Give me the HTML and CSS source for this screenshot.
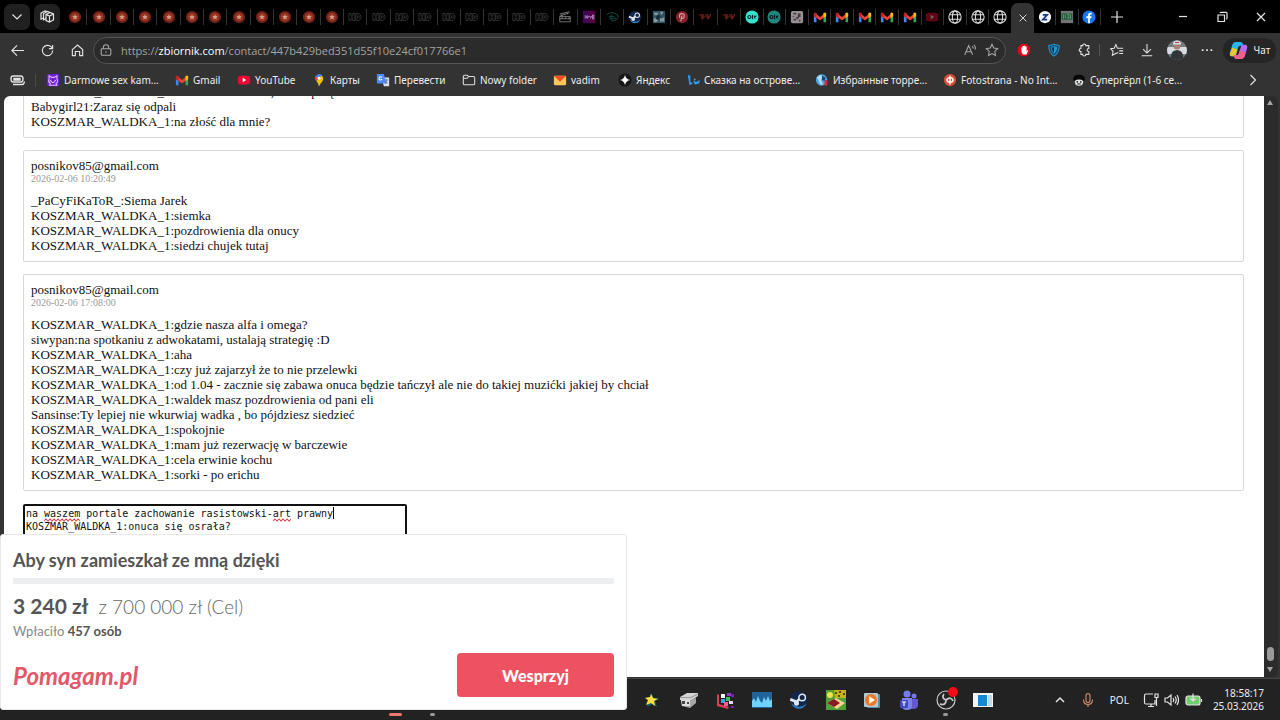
FILE: index.html
```
<!DOCTYPE html>
<html lang="pl">
<head>
    <meta charset="UTF-8">
    <meta name="viewport" content="width=device-width, initial-scale=1.0">
    <title>zbiornik.com</title>
    <link rel="stylesheet" href="styles.css">
</head>
<body>

<svg class="symbols" aria-hidden="true">
    <symbol id="i-star" viewBox="0 0 16 16"><circle cx="8" cy="8" r="7" fill="#6d2017"/><circle cx="8" cy="8" r="5" fill="#983520"/><path d="M8 4.8l.9 2.1 2.3.2-1.7 1.5.5 2.3L8 9.7l-2 1.2.5-2.3-1.7-1.5 2.3-.2z" fill="#d3a08e"/></symbol>
    <symbol id="i-hd" viewBox="0 0 16 16"><path d="M1 4h2.5v3h2V4H8v8H5.500V9h-2v3H1zM9 4h3q3 1 3 4t-3 4H9zM11 6.500h1q1 .5 1 1.500t-1 1.500h-1z" fill="none" stroke="#424242" stroke-width=".8"/></symbol>
    <symbol id="i-clap" viewBox="0 0 16 16"><path d="M2 7.5h12v6H2zM2 7l11-4M2 4.5L13 2M4 5l1 2M7 4l1 2M10 3l1 2M2 10h12M5 8l-1 2M9 8l-1 2M13 8l-1 2" fill="none" stroke="#8b8b8b" stroke-width=".9"/></symbol>
    <symbol id="i-sky" viewBox="0 0 16 16"><rect x="1" y="1" width="14" height="14" fill="#410458"/><rect x="8" y="1" width="7" height="14" fill="#570040"/><path d="M3 7h2M3 9h2M5 7v2M6.5 6v4M6.5 8l2-1M9 7l1 2 1-2M12 6h1.5v4H12z" stroke="#a477b9" fill="none"/></symbol>
    <symbol id="i-disney" viewBox="0 0 16 16"><path d="M2 5q6-4 11 0t-2 7q-4 1-4-1V5M4 8q4-2 7 0t-2 2H5M13 5l2 1" fill="none" stroke="#114d45" stroke-width="1.1"/></symbol>
    <symbol id="i-steam" viewBox="0 0 16 16"><circle cx="8" cy="8" r="7" fill="#10284d"/><path d="M1.500 10.500Q8 16 14 11q-2 4-6 4t-6.500-4.500z" fill="#2e7eb8"/><path d="M1 7.500l5 2 3-3" stroke="#dce7f1" stroke-width="2.200" fill="none"/><circle cx="10.500" cy="6" r="2.600" fill="#14213d" stroke="#dce7f1" stroke-width="1.200"/><circle cx="6" cy="10.500" r="2" fill="#dce7f1"/></symbol>
    <symbol id="i-pic" viewBox="0 0 16 16"><rect x="1" y="1" width="14" height="14" fill="#315368"/><path d="M2 3h5v3H3zM9 2h4l-2 4zM2 10l5-3 4 3 3-2v5H9v-3L5 14H2z" fill="#8a9a9b"/><path d="M6 5l4 2-2 5-4-2z" fill="#172f3b"/></symbol>
    <symbol id="i-pin" viewBox="0 0 16 16"><circle cx="8" cy="8" r="7" fill="#8b2029"/><path d="M6.500 13L8 6.500M5.500 9Q4 4 8 4.200T10 9q-1.500 1-2.500 0" fill="none" stroke="#d0a2a5" stroke-width="1.300"/></symbol>
    <symbol id="i-red" viewBox="0 0 16 16"><path d="M1 5.500h5L4 8h3l-3 3M8 5.500h3v4M9 8h4l-2 3M14.500 4.500L13 8" fill="none" stroke="#6b1c15" stroke-width="1.500"/></symbol>
    <symbol id="i-olx" viewBox="0 0 16 16"><circle cx="8" cy="8" r="7.500" fill="#31e5d2"/><circle cx="5" cy="8" r="1.700" fill="none" stroke="#062b30" stroke-width="1.300"/><path d="M8.500 5.500v5M10 6.500l3 3M13 6.500l-3 3" stroke="#062b30" stroke-width="1.300"/></symbol>
    <symbol id="i-pixel" viewBox="0 0 16 16"><rect x="1" y="1" width="14" height="14" rx="2" fill="#969093"/><path d="M4 3h3v2H4zM9 4h3v4h-2v2H7v2H4v-2h3V8h2zM3 7h2v1H3zM10 11h2v2h-2z" fill="#433841"/></symbol>
    <symbol id="i-gmail" viewBox="0 0 16 16"><path d="M1 14V4h3v10z" fill="#4285f4"/><path d="M12 14V4h3v10z" fill="#34a853"/><path d="M2 3l6 5 6-5v4.500L8 12 2 7.500z" fill="#ea4335"/><path d="M1 4q1-2 3-.5V9L1 7z" fill="#c5221f"/><path d="M15 4q-1-2-3-.5V9l3-2z" fill="#fbbc04"/></symbol>
    <symbol id="i-yt" viewBox="0 0 16 16"><rect x="1" y="3" width="14" height="10" rx="3" fill="#f00533"/><path d="M6.5 5.5v5l4-2.5z" fill="#fff"/></symbol>
    <symbol id="i-globe" viewBox="0 0 16 16"><g fill="none" stroke="#ddd" stroke-width="1.2"><circle cx="8" cy="8" r="7"/><ellipse cx="8" cy="8" rx="3" ry="7"/><path d="M1.500 5.500h13M1.500 10.500h13"/></g></symbol>
    <symbol id="i-z" viewBox="0 0 16 16"><circle cx="8" cy="8" r="7" fill="#f7f9ff"/><path d="M5.500 5.500h5l-5 5.500h5" fill="none" stroke="#183b80" stroke-width="2"/></symbol>
    <symbol id="i-green" viewBox="0 0 16 16"><rect x="1" y="1" width="14" height="14" fill="#707574"/><path d="M2 4h12v7H2z" fill="#1e5c35"/><path d="M4 5v5M6 5v4M8 5h2v4H8M12 5v5" stroke="#609377" fill="none"/></symbol>
    <symbol id="i-fb" viewBox="0 0 16 16"><circle cx="8" cy="8" r="7.500" fill="#1877f2"/><path d="M7 15V9.500H5V7.200h2V5.500Q7 3 9.500 3H11v2H9.800Q9 5 9 6v1.200h2l-.4 2.300H9V15z" fill="#fff"/></symbol>
</svg>

<div class="tabstrip">
    <button class="chip" aria-label="Karty"><svg viewBox="0 0 16 16"><path d="M3.5 5.5L8 10l4.500-4.500"/></svg></button>
    <button class="chip" aria-label="Obszary robocze"><svg viewBox="0 0 16 16"><path d="M7 5.500l4-2 3.500 1.500v6L10.500 13 7 11.500zM7 5.500L10.500 7l4-2M10.500 7v6M7 9.500l-2.500 1.300V4.500L8.500 2.500l2.500 1M4.500 9L2 10V4l4-2 2 .5"/></svg></button>
    <div class="tabs tabs-wide" id="tabsWide"></div>
    <div class="tabs tabs-mid" id="tabsMid"></div>
    <button class="tab-active" aria-label="Zamknij kartę"><svg viewBox="0 0 16 16"><path d="M3.500 3.500l9 9M12.500 3.500l-9 9"/></svg></button>
    <div class="tabs tabs-end" id="tabsEnd"></div>
    <button class="newtab" aria-label="Nowa karta"><svg viewBox="0 0 16 16"><path d="M8 2v12M2 8h12"/></svg></button>
    <div class="window-buttons">
        <button aria-label="Minimalizuj"><svg viewBox="0 0 16 16"><path d="M4 7.500h8"/></svg></button>
        <button aria-label="Przywróć"><svg viewBox="0 0 16 16"><path d="M4 6h6.500v6.500H4zM6 4q.3-.7 1-.7h5q1 0 1 1V9q0 1-.8 1.200"/></svg></button>
        <button aria-label="Zamknij"><svg viewBox="0 0 16 16"><path d="M4 4l8 8M12 4l-8 8"/></svg></button>
    </div>
</div>

<div class="toolbar">
    <div class="nav-buttons">
        <button aria-label="Wstecz"><svg viewBox="0 0 16 16"><path d="M15 8H2M7.500 2.500L2 8l5.500 5.500"/></svg></button>
        <button aria-label="Odśwież"><svg viewBox="0 0 16 16"><path d="M13.500 8A5.500 5.500 0 1 1 12 4.200l1.500 1.600M13.500 2v4h-4"/></svg></button>
        <button aria-label="Strona główna"><svg viewBox="0 0 16 16"><path d="M2.500 7L8 2.200 13.500 7v6.500h-3.200V9H5.700v4.500H2.500z"/></svg></button>
    </div>
    <div class="address">
        <svg class="dim" viewBox="0 0 16 16"><path d="M3.500 6.500h9q1 0 1 1v5q0 1.500-1.500 1.500H4q-1.500 0-1.500-1.500v-5q0-1 1-1zM5 6V4.500Q5 2 8 2t3 2.500V6M8 9.500v1.500"/></svg>
        <div class="url" role="textbox" aria-label="Adres">https://<b>zbiornik.com</b>/contact/447b429bed351d55f10e24cf017766e1</div>
        <svg class="dim" viewBox="0 0 16 16"><path d="M2 13.500L6.500 3 11 13.500M3.500 10h6M10.500 3.500q1.500 1.500 1 3M12.500 2q2.500 2.500 1.500 5.500"/></svg>
        <svg class="dim" viewBox="0 0 16 16"><path d="M8 1.500l2 4.300 4.500.6-3.300 3.200.8 4.700L8 12l-4 2.300.8-4.700L1.500 6.400 6 5.800z"/></svg>
    </div>
    <div class="extensions">
        <button aria-label="AdBlock"><svg viewBox="0 0 16 16"><path d="M5 1h6l4 4v6l-4 4H5l-4-4V5z" fill="#e4001b" stroke="none"/><path d="M5 8V5h1.300V3.500h1.500V3h1.500v1H11v5l1-1 .8.500-2 4.500H7Q5 12 5 8z" fill="#fff" stroke="none"/></svg></button>
        <button aria-label="Ochrona"><svg viewBox="0 0 16 16"><path d="M8 1.500L14 3q0 8-6 12Q2 11 2 3z" fill="#0c4b6e" stroke="#2494c8"/><path d="M8 4l3 1q0 4-3 7-3-3-3-7z" fill="#0b2638" stroke="#2494c8"/><path d="M8 4l3 1q0 4-3 7z" fill="#2494c8" stroke="none"/></svg></button>
        <button aria-label="Rozszerzenia"><svg viewBox="0 0 16 16"><path d="M4.500 3h2q0-1.800 1.800-1.800T10.100 3h3.400v3.300q-2 0-2 1.700t2 1.700V13h-3.400q0 1.800-1.800 1.800T6.500 13h-2V9.800Q2.500 9.800 2.500 8t2-1.800z"/></svg></button>
    </div>
    <div class="tools">
        <button aria-label="Ulubione"><svg viewBox="0 0 16 16"><path d="M9.500 10.800L6.500 12l-3.800 2 .8-4.300L.8 6.500l4-.5 1.900-4.200L8.500 6H15M10.500 9H15M10.500 12H15"/></svg></button>
        <button aria-label="Pobrane"><svg viewBox="0 0 16 16"><path d="M8 1v10M3.500 7L8 11.500 12.500 7M2 14.500h12"/></svg></button>
        <button aria-label="Profil"><svg class="avatar" viewBox="0 0 20 20"><defs><clipPath id="round"><circle cx="10" cy="10" r="10"/></clipPath></defs><g clip-path="url(#round)" stroke="none"><path d="M0 0h20v20H0z" fill="#747b80"/><path d="M0 7h20v7H0z" fill="#d6dde2"/><path d="M4 20q-1-10 6-10t6 10z" fill="#30343b"/><circle cx="10" cy="6" r="3.500" fill="#a98075"/><path d="M6 4.500q0-4 4-4t4 4z" fill="#dedede"/><path d="M8 2h4v1H8z" fill="#a54444"/></g></svg></button>
        <button aria-label="Więcej"><svg viewBox="0 0 16 16"><path d="M2 8h2M7 8h2M12 8h2" stroke-width="2"/></svg></button>
    </div>
    <button class="chat"><svg viewBox="0 0 20 20"><g stroke="none"><path d="M7 1h5q2 0 2.500 2l.5 2h-3q-2 0-2.500 2L7.500 14q-.5 2-2.500 2H3q-3 0-2-4l2.500-8Q4.500 1 7 1z" fill="#28b4ed"/><path d="M3.500 7L1 13q-.5 3 2 3h2q2 0 2.500-2L9 9z" fill="#e7c72f"/><path d="M13 19H8q-2 0-2.500-2L5 15h3q2 0 2.500-2l2-7Q13 4 15 4h2q3 0 2 4l-2.500 8q-1 3-3.500 3z" fill="#b66bf5"/><path d="M5 15h3q2 0 2.500-2l1-3.500 6 3-1 3.500q-1 3-3.500 3H8q-2 0-3-4z" fill="#f45f86"/></g></svg>Чат</button>
</div>

<nav class="bookmarks">
    <button class="bm-start" aria-label="Hub"><svg viewBox="0 0 16 16"><path d="M4 4h8q2 0 2 3t-2 3H4q-2 0-2-3t2-3zM5 6.500h6v1.500H5zM4 12.500h9q2 0 2.500-3" stroke-width="1.400"/></svg></button>
    <div class="bm-list">
        <a href="#"><svg viewBox="0 0 16 16"><rect x="1" y="1" width="14" height="14" rx="2" fill="#6820d4"/><path d="M3.500 3l3 2h3l3-2v4q2 3-1 5l1 2H4l1-2Q2 10 3.500 7zM5 8q1 3 3 3t3-3" fill="none" stroke="#e8b6ff" stroke-width="1.200"/></svg>Darmowe sex kam...</a>
        <a href="#"><svg><use href="#i-gmail"/></svg>Gmail</a>
        <a href="#"><svg><use href="#i-yt"/></svg>YouTube</a>
        <a href="#"><svg viewBox="0 0 16 16"><path d="M8 15.500Q7 12 5 9.500 2.500 7 3.500 4l4.500 2z" fill="#34a853"/><path d="M4 4q3-5 7.500-1.500L6.500 8Q5 7 4 4z" fill="#4285f4"/><path d="M11 2.500q3.500 3.500.5 7.500-2 2-3.500 5.500-.7-4-2.500-6.500z" fill="#fbbc04"/><path d="M3.700 4q-1 3 1 5l3-3z" fill="#ea4335"/><circle cx="8" cy="6" r="1.700" fill="#fff"/></svg>Карты</a>
        <a href="#"><svg viewBox="0 0 16 16"><path d="M6 5h9v10H9z" fill="#dce2e9"/><path d="M1 1h8l3 11H1z" fill="#4c8bf5"/><path d="M7 5Q4 3 3.500 6T7 7.500H5.500" fill="none" stroke="#fff"/><path d="M10 8h4M12 7l-1 5M11 9l2 3" stroke="#627b9a"/></svg>Перевести</a>
        <a href="#"><svg viewBox="0 0 16 16"><path d="M1.500 4q0-1.500 1.500-1.500h3L7.500 4H13q1.500 0 1.500 1.500V12q0 1.500-1.500 1.500H3Q1.500 13.500 1.500 12zM1.500 6H6l1.500-2" fill="none" stroke="#ddd" stroke-width="1.200"/></svg>Nowy folder</a>
        <a href="#"><svg viewBox="0 0 16 16"><rect x="1" y="3" width="14" height="11" rx="1.500" fill="#ffc65c"/><path d="M1 3h14l-7 7z" fill="#ef4f20"/></svg>vadim</a>
        <a href="#"><svg viewBox="0 0 16 16"><circle cx="8" cy="8" r="7.500" fill="#161616"/><path d="M8 2q.8 5.200 6 6-5.200.8-6 6-.8-5.200-6-6 5.200-.8 6-6z" fill="#fff"/></svg>Яндекс</a>
        <a href="#"><svg viewBox="0 0 16 16"><path d="M2 2l3 1v7l3 2-4 2zM8 9l2 4 5-1 1-4-4 2z" fill="#2d9bef"/><path d="M9 6l2 1-1 2z" fill="#77c7fa"/></svg>Сказка на острове...</a>
        <a href="#"><svg viewBox="0 0 16 16"><circle cx="7.500" cy="8" r="6.500" fill="#4aa7e5"/><path d="M2 5l4-3 3 2-2 4 2 5H6L4 8z" fill="#b3d9f6"/><path d="M8 3l4 2-1 4-3-1z" fill="#14466f"/><path d="M11 8h3v4h1l-2.500 3L10 12h1z" fill="#dd2740"/></svg>Избранные торре...</a>
        <a href="#"><svg viewBox="0 0 16 16"><circle cx="8" cy="8" r="7" fill="#e24a32"/><ellipse cx="8" cy="8" rx="3.500" ry="2.500" fill="none" stroke="#fff" stroke-width="1.700"/><path d="M8 3v10" stroke="#fff" stroke-width="1.700"/></svg>Fotostrana - No Int...</a>
        <a href="#"><svg viewBox="0 0 16 16"><path d="M1 8q0-6 7-6t7 6l-2 1H3z" fill="#080808"/><path d="M3 9q5-3 10 0l-1 4q-4 3-8 0z" fill="#e1e4e8"/><circle cx="6" cy="10" r="1" fill="#222"/><circle cx="10" cy="10" r="1" fill="#222"/><path d="M6 12.500h4" stroke="#222"/></svg>Супергёрл (1-6 се...</a>
    </div>
    <button class="bm-more" aria-label="Więcej zakładek"><svg viewBox="0 0 16 16"><path d="M5.500 3l5 5-5 5"/></svg></button>
</nav>

<div class="window">
    <main class="page">
        <section class="message">
            <p>KOSZMAR_WALDKA_1:zaraz on tu do was, ale na porę</p>
            <p>Babygirl21:Zaraz się odpali</p>
            <p>KOSZMAR_WALDKA_1:na złość dla mnie?</p>
        </section>
        <section class="message">
            <div class="author">posnikov85@gmail.com</div>
            <div class="date">2026-02-06 10:20:49</div>
            <p>_PaCyFiKaToR_:Siema Jarek</p>
            <p>KOSZMAR_WALDKA_1:siemka</p>
            <p>KOSZMAR_WALDKA_1:pozdrowienia dla onucy</p>
            <p>KOSZMAR_WALDKA_1:siedzi chujek tutaj</p>
        </section>
        <section class="message">
            <div class="author">posnikov85@gmail.com</div>
            <div class="date">2026-02-06 17:08:00</div>
            <p>KOSZMAR_WALDKA_1:gdzie nasza alfa i omega?</p>
            <p>siwypan:na spotkaniu z adwokatami, ustalają strategię :D</p>
            <p>KOSZMAR_WALDKA_1:aha</p>
            <p>KOSZMAR_WALDKA_1:czy już zajarzył że to nie przelewki</p>
            <p>KOSZMAR_WALDKA_1:od 1.04 - zacznie się zabawa onuca będzie tańczył ale nie do takiej muzićki jakiej by chciał</p>
            <p>KOSZMAR_WALDKA_1:waldek masz pozdrowienia od pani eli</p>
            <p>Sansinse:Ty lepiej nie wkurwiaj wadka , bo pójdziesz siedzieć</p>
            <p>KOSZMAR_WALDKA_1:spokojnie</p>
            <p>KOSZMAR_WALDKA_1:mam już rezerwację w barczewie</p>
            <p>KOSZMAR_WALDKA_1:cela erwinie kochu</p>
            <p>KOSZMAR_WALDKA_1:sorki - po erichu</p>
        </section>
        <div class="reply">
            <textarea aria-label="Odpowiedź" spellcheck="false">na waszem portale zachowanie rasistowski-art prawny
KOSZMAR_WALDKA_1:onuca się osrała?</textarea>
            <svg class="squiggle squiggle-a" viewBox="0 0 36 4" preserveAspectRatio="none"><path d="M0 3l2-2 2 2 2-2 2 2 2-2 2 2 2-2 2 2 2-2 2 2 2-2 2 2 2-2 2 2 2-2 2 2 2-2 2 2"/></svg>
            <svg class="squiggle squiggle-b" viewBox="0 0 18 4" preserveAspectRatio="none"><path d="M0 3l2-2 2 2 2-2 2 2 2-2 2 2 2-2 2 2 2-2"/></svg>
            <span class="caret"></span>
        </div>
    </main>
    <div class="scrollbar">
        <svg viewBox="0 0 8 8"><path d="M4 1l3 5H1z"/></svg>
        <span class="thumb"></span>
        <svg viewBox="0 0 8 8"><path d="M4 7l3-5H1z"/></svg>
    </div>
</div>

<aside class="donate">
    <h2>Aby syn zamieszkał ze mną dzięki</h2>
    <div class="progress"></div>
    <div class="amount"><b>3 240 zł</b><span>z 700 000 zł (Cel)</span></div>
    <div class="donors">Wpłaciło <b>457 osób</b></div>
    <div class="donate-foot">
        <a class="logo" href="#">Pomagam.pl</a>
        <button>Wesprzyj</button>
    </div>
</aside>

<footer class="taskbar">
    <div class="apps">
        <button class="running alert" aria-label="Przeglądarka"></button>
        <button class="running" aria-label="Eksplorator"></button>
        <button aria-label="App"></button>
        <button aria-label="App"></button>
        <button aria-label="App"></button>
        <button aria-label="App"></button>
        <button aria-label="App"></button>
        <button aria-label="Gwiazda"><svg viewBox="0 0 20 20"><path d="M9 3l3 5h5l-4 3 2 6-5-3-5 3 2-6-4-3 5-1z" fill="#12647a"/><path d="M9 4l2 4 5 1-4 2 1 5-4-3-5 2 2-5-3-2 5-1z" fill="#ffdf3e"/></svg></button>
        <button aria-label="Archiwum"><svg viewBox="0 0 20 20"><path d="M1 7l7-4h11v3l-6 4H1z" fill="#d5d5d5"/><path d="M2 10h9l6-2v5l-6 5-8-2z" fill="#a5a5a5"/><path d="M2 10h9v6H3z" fill="#dedede"/><path d="M1 7.500h11l7-3.500" fill="none" stroke="#999"/><path d="M3 11h3v3H3zM8 12h2v2H8z" fill="#444"/></svg></button>
        <button aria-label="Kostki"><svg viewBox="0 0 20 20"><path d="M1 4l2 1v9l10 3-1 2-11-3z" fill="#e43c50"/><path d="M5 4h4v4H5z" fill="#f6fafa"/><path d="M11 3h4v3h-4z" fill="#903cc9"/><path d="M5 9h4v4H5z" fill="#36a9e0"/><path d="M10 7h4v4h-4z" fill="#48b961"/><path d="M8 12h4v4H8z" fill="#f25c9a"/><path d="M13 11h4v3h-4z" fill="#e8d4ff"/><path d="M15 4h3v3h-3zM15 16h3v2h-3z" fill="#6e27a8"/></svg></button>
        <button aria-label="Monitor"><svg viewBox="0 0 20 20"><path d="M0 2h20v16H0z" fill="#21649b"/><path d="M0 17v-6l2-3 2 4 2-6 2 5 2 2 2-6 2 4 2-5 2 5 2-2v8z" fill="#71d2fa"/></svg></button>
        <button aria-label="Steam"><svg><use href="#i-steam"/></svg></button>
        <button aria-label="Gra"><svg viewBox="0 0 20 20"><path d="M0 0h20v20H0z" fill="#4fa334"/><path d="M8 0h12v8H9z" fill="#c4b31f"/><path d="M9 2h2v2H9zM13 1h2v2h-2zM17 3h2v2h-2zM12 5h2v2h-2z" fill="#584e13"/><circle cx="4" cy="5" r="3" fill="#f2e24a"/><path d="M1 13l9-5 9 5-8 6z" fill="#f4d38a"/><path d="M1 13l7-4 6 4-6 4z" fill="#8b1b23"/></svg></button>
        <button aria-label="Odtwarzacz"><svg viewBox="0 0 20 20"><rect x="5" y="4" width="13" height="14" rx="1" fill="#5591a7"/><rect x="2" y="3" width="14" height="14" rx="1" fill="#b6c9cf"/><circle cx="9" cy="10" r="6" fill="#f07825"/><path d="M7 6v8l6-4z" fill="#fff"/></svg></button>
        <button aria-label="Teams"><svg viewBox="0 0 20 20"><circle cx="8" cy="4" r="3.500" fill="#747bea"/><circle cx="15" cy="6" r="2.500" fill="#7777e5"/><path d="M10 9h9v6q0 4-5 4h-4z" fill="#6358ce"/><path d="M3 8h10v8q0 4-5 4t-5-4z" fill="#7b83eb"/><rect x="1" y="10" width="8" height="8" rx="1" fill="#424bc5"/><path d="M3 12h4M5 12v4" stroke="#fff" stroke-width="1.200"/></svg></button>
        <button class="running recording" aria-label="OBS"><svg viewBox="0 0 20 20"><circle cx="10" cy="10" r="9" fill="#242424" stroke="#ccc" stroke-width="1.200"/><path d="M10 10Q5 8 8 4M10 10q5-4 7 1M10 10q0 6-6 4" fill="none" stroke="#ccc" stroke-width="1.700"/></svg></button>
        <button aria-label="Program"><svg viewBox="0 0 20 20"><path d="M0 3h20v14H0z" fill="#f4f4f4"/><path d="M5 5h9v11H5z" fill="#1687d1"/><path d="M15 5h4v11h-4z" fill="#b9dcf1"/></svg></button>
    </div>
    <div class="tray">
        <svg viewBox="0 0 16 16"><path d="M4 10l4-4 4 4" stroke-width="1.500"/></svg>
        <svg class="mic" viewBox="0 0 16 16"><path d="M6 4q0-2.500 2-2.500T10 4v4q0 2.500-2 2.500T6 8zM3.500 7.500q0 5 4.500 5t4.500-5M8 12.500V15"/></svg>
        <span class="lang">POL</span>
        <svg viewBox="0 0 16 16"><path d="M10 2H3Q1.500 2 1.500 3.500v7Q1.500 12 3 12h9V8M5 14.500h6M8 12v2.500M12 2h3v3.500h-3zM13.500 5.500V14"/></svg>
        <svg viewBox="0 0 16 16"><path d="M2 6h2.500L8 3v10L4.500 10H2zM10 6q1.500 2 0 4M12 4.500q2.500 3.500 0 7M14 3q3 5 0 10"/></svg>
        <svg class="battery" viewBox="0 0 18 16"><rect x="1" y="4" width="14" height="9" rx="2" fill="#72cf70"/><path d="M16.500 7v3M8 1.500V9M5.500 6.500L8 9l2.500-2.500"/></svg>
        <div class="clock">18:58:17<br>25.03.2026</div>
    </div>
</footer>

<script>
    const wide = [...Array(12).fill('star'), ...Array(9).fill('hd'), 'clap', 'sky', 'disney', 'steam', 'pic', 'pin', 'red', 'red'];
    const mid = ['olx', 'olx dimmed', 'pixel', 'gmail', 'gmail', 'gmail', 'gmail', 'gmail', 'yt dark', 'globe', 'globe', 'globe'];
    const end = ['z', 'green', 'fb'];

    function fillTabs(id, icons) {
        document.getElementById(id).innerHTML = icons.map(icon => {
            let [name, state = ''] = icon.split(' ');
            return `<button class="tab ${state}" aria-label="Karta"><svg><use href="#i-${name}"/></svg></button>`;
        }).join('');
    }

    fillTabs('tabsWide', wide);
    fillTabs('tabsMid', mid);
    fillTabs('tabsEnd', end);
</script>

</body>
</html>
```
FILE: styles.css
```
* { box-sizing: border-box; }
body { margin: 0; height: 100vh; overflow: hidden; display: flex; flex-direction: column; background: #333; color: #eee; font-family: "Noto Sans", "Open Sans", sans-serif; font-size: 10px; }
button { border: none; background: none; padding: 0; color: inherit; font: inherit; display: flex; align-items: center; justify-content: center; }
a { color: inherit; text-decoration: none; }
svg { width: 16px; height: 16px; flex: none; fill: none; stroke: #e4e4e4; stroke-width: 1.2; }
use, .bm-list svg, .apps svg { stroke: none; }
p { margin: 0; }
.symbols { position: absolute; width: 0; height: 0; }

/* tabs */
.tabstrip { height: 33px; flex: none; display: flex; align-items: center; background: #000; padding-left: 4px; }
.chip { width: 26px; height: 26px; border-radius: 7px; background: #202020; margin-right: 4px; }
.tabs { display: flex; align-items: center; }
.tabs-wide { width: 677px; }
.tabs-mid { width: 270px; }
.tabs-end { width: 67px; }
.tab { flex: 1; height: 16px; border-right: 1px solid #343434; }
.tab svg { width: 14px; height: 14px; }
.dimmed svg { opacity: .6; }
.dark svg { opacity: .4; }
.tab-active { width: 23px; height: 30px; align-self: flex-end; border-radius: 7px 7px 0 0; background: #333; }
.tab-active svg { width: 12px; height: 12px; }
.tabs-mid .tab:last-child { border: none; }
.newtab { width: 32px; }
.window-buttons { margin-left: auto; display: flex; }
.window-buttons button { width: 39px; }

/* address row */
.toolbar { height: 34px; flex: none; display: flex; align-items: center; padding: 0 4px 0 2px; }
.nav-buttons, .extensions, .tools { display: flex; }
.nav-buttons button, .extensions button, .tools button { width: 30px; height: 26px; }
.nav-buttons svg { width: 15px; height: 15px; }
.address { flex: 1; height: 27px; display: flex; align-items: center; gap: 8px; margin: 0 3px 0 1px; padding: 0 6px 0 5px; border: 1px solid #555; border-radius: 14px; background: #2b2b2b; }
.address svg { width: 14px; height: 14px; }
.address .dim { stroke: #aaa; }
.url { flex: 1; color: #a3a3a3; font-family: "Open Sans", sans-serif; font-size: 11px; }
.url b { color: #fff; font-weight: 400; }
.extensions { border-right: 1px solid #555; height: 12px; align-items: center; }
.extensions svg, .tools svg { width: 14px; height: 14px; }
.tools { margin-left: 2px; }
.tools .avatar { width: 20px; height: 20px; }
.chat { width: 53px; height: 25px; border-radius: 12px; background: #252525; gap: 6px; margin-left: 1px; }
.chat svg { width: 19px; height: 19px; }

/* bookmarks */
.bookmarks { height: 29px; flex: none; display: flex; align-items: center; padding: 0 19px 3px 9px; }
.bm-start { width: 27px; height: 13px; justify-content: flex-start; border-right: 1px solid #4b4b4b; }
.bm-list { flex: 1; margin-left: 10px; display: grid; grid-template-columns: 129px 62px 75px 64px 86px 91px 65px 68px 129px 128px 129px 1fr; }
.bm-list a { display: flex; align-items: center; gap: 4px; white-space: nowrap; }
.bm-list svg { width: 14px; height: 14px; }

/* page */
.window { flex: 1; min-height: 0; display: flex; margin: 0 2px 0 4px; }
.page { flex: 1; overflow: hidden; padding: 0 20px 0 19px; background: #fff; color: #111; border-radius: 6px 0 0 0; font-family: "Liberation Serif", serif; font-size: 13px; line-height: 15px; }
.message { border: 1px solid #d8d8d8; border-radius: 2px; padding: 7px 7px 8px; margin-bottom: 12px; }
.message:first-child { margin-top: -20px; }
.date { color: #999; font-size: 10px; line-height: 12px; margin-bottom: 8px; }
.reply { position: relative; width: 384px; margin-top: 13px; font-family: "DejaVu Sans Mono", monospace; font-size: 10px; }
.reply textarea { display: block; width: 100%; height: 80px; padding: 1px; border: 2px solid #111; border-radius: 2px; outline: none; resize: none; color: #111; font: inherit; line-height: 13px; }
.squiggle { position: absolute; top: 14px; height: 4px; stroke: #d53b50; stroke-width: 1; }
.squiggle-a { left: calc(3px + 3ch); width: 6ch; }
.squiggle-b { left: calc(3px + 41ch); width: 3ch; }
.caret { position: absolute; top: 3px; left: calc(3px + 51ch); width: 1px; height: 12px; background: #000; }
.scrollbar { width: 14px; display: flex; flex-direction: column; align-items: center; padding: 3px 2px 4px 0; background: #2b2b2b; border-radius: 0 6px 6px 0; }
.scrollbar svg { width: 8px; height: 8px; fill: #a5a5a5; stroke: none; }
.thumb { width: 7px; height: 14px; border-radius: 4px; margin: auto 0 4px; background: #9a9a9a; }

/* donation box */
.donate { position: fixed; left: 0; bottom: 10px; width: 627px; padding: 12px; background: #fff; color: #555; border: 1px solid #e8e8e8; border-radius: 3px; font-family: Lato, sans-serif; }
.donate h2 { margin: 0 0 4px; font-size: 18px; line-height: 27px; font-weight: 700; }
.progress { height: 6px; background: #eceeef; border-radius: 1px; }
.amount { display: flex; align-items: baseline; gap: 10px; margin-top: 8px; font-size: 19px; line-height: 28px; }
.amount b { font-size: 21px; }
.amount span { color: #666; font-weight: 300; }
.donors { font-size: 13px; line-height: 20px; color: #888; }
.donors b { color: #555; }
.donate-foot { display: flex; justify-content: space-between; align-items: center; margin-top: 12px; }
.logo { color: #e35768; font-size: 24px; font-style: italic; font-weight: 700; }
.donate-foot button { width: 157px; height: 44px; border-radius: 4px; background: #ec5261; color: #fff; font-size: 16px; font-weight: 900; }

/* taskbar */
.taskbar { height: 42px; flex: none; display: flex; align-items: center; justify-content: space-between; margin-top: 1px; padding: 0 16px 0 377px; background: #222; border-top: 1px solid #444; }
.apps { display: flex; width: 624px; height: 100%; }
.apps button { flex: 1; position: relative; }
.apps svg { width: 20px; height: 20px; }
.running::after { content: ""; position: absolute; bottom: 4px; width: 5px; height: 3px; border-radius: 2px; background: #999; }
.alert::after { width: 13px; background: #ef7770; }
.recording::before { content: ""; position: absolute; top: 8px; right: 6px; width: 10px; height: 10px; border-radius: 50%; background: #f40b16; }
.tray { display: flex; align-items: center; }
.tray svg { margin-right: 4px; }
.tray svg:first-child { margin-right: 12px; }
.tray .mic { stroke: #c98966; margin-right: 14px; }
.lang { margin-right: 14px; }
.tray .battery { width: 18px; margin: 0 10px 0 2px; }
.clock { text-align: right; line-height: 13px; }
```
